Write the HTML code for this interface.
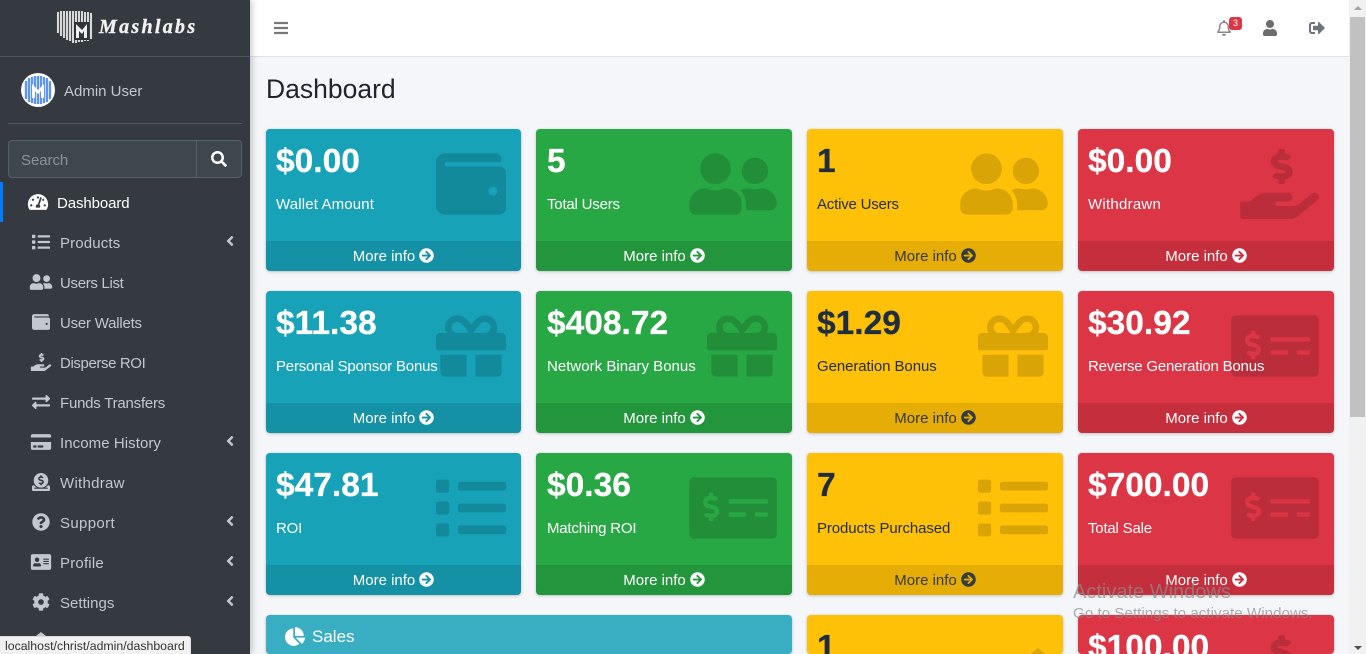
<!DOCTYPE html>
<html lang="en"><head><meta charset="utf-8"><title>Dashboard</title>
<style>
*{box-sizing:border-box}
html,body{margin:0;padding:0;width:1366px;height:654px;max-height:654px;overflow:hidden;background:#f4f6f9;font-family:"Liberation Sans",sans-serif}
#wrap{position:fixed;left:0;top:0;width:1366px;height:654px;overflow:hidden;background:#f4f6f9;contain:strict}
.a{position:absolute}
#side{position:absolute;left:0;top:0;width:250px;height:654px;background:#343a40;box-shadow:2px 0 6px rgba(0,0,0,.22);overflow:hidden;z-index:3}
#top{position:absolute;left:250px;top:0;width:1099px;height:57px;background:#fff;border-bottom:1px solid #dee2e6;z-index:2}
.t{position:absolute;left:60px;font-size:15px;letter-spacing:-.22px;line-height:20px;color:#c2c7d0;white-space:nowrap}
.si{position:absolute;left:29px;width:24px;height:18px;fill:#c2c7d0}
.ar{position:absolute;left:226px;width:8px;height:16px;fill:#c2c7d0}
.c{position:absolute;width:256px;height:142px;border-radius:4px;box-shadow:0 0 1px rgba(0,0,0,.125),0 1px 3px rgba(0,0,0,.2);overflow:hidden;color:#fff}
.b{background:#17a2b8}.g{background:#28a745}.y{background:#ffc107;color:#1f2d3d}.r{background:#dc3545}
.v{position:absolute;left:10px;top:16px;font-size:33.5px;line-height:34px;font-weight:700;white-space:nowrap;-webkit-text-stroke:.3px currentColor}
.l{position:absolute;left:10px;top:66px;font-size:15px;letter-spacing:-.2px;line-height:20px;white-space:nowrap}
.g .v,.g .l{left:11px}
.ic{position:absolute;right:15px;top:20px;height:70px;fill:rgba(0,0,0,.15)}
.f{position:absolute;left:0;right:0;bottom:0;height:30px;background:rgba(0,0,0,.1);text-align:center;font-size:15px;line-height:28px;padding-top:2px;white-space:nowrap;overflow:hidden}
.f svg{width:15px;height:15px;fill:currentColor;vertical-align:-2px;margin-left:4px}
.y .f{color:#343a40}
</style></head><body>
<div id="wrap">
<svg width="0" height="0" style="position:absolute"><defs>
<path id="wallet" d="M461.2 128H80c-8.84 0-16-7.16-16-16s7.16-16 16-16h384c8.84 0 16-7.16 16-16 0-26.51-21.49-48-48-48H64C28.65 32 0 60.65 0 96v320c0 35.35 28.65 64 64 64h397.2c28.02 0 50.8-21.53 50.8-48V176c0-26.47-22.78-48-50.8-48zM416 340c-17.67 0-32-14.33-32-32s14.33-32 32-32 32 14.33 32 32-14.33 32-32 32z"/>
<path id="friends" d="M192 256c61.9 0 112-50.1 112-112S253.9 32 192 32 80 82.1 80 144s50.1 112 112 112zm76.8 32h-8.3c-20.8 10-43.9 16-68.5 16s-47.6-6-68.5-16h-8.3C51.6 288 0 339.6 0 403.2V432c0 26.5 21.5 48 48 48h288c26.5 0 48-21.5 48-48v-28.8c0-63.6-51.6-115.2-115.2-115.2zM480 256c53 0 96-43 96-96s-43-96-96-96-96 43-96 96 43 96 96 96zm48 32h-3.8c-13.9 4.8-28.6 8-44.2 8s-30.3-3.2-44.2-8H432c-20.4 0-39.2 5.9-55.7 15.4 24.4 26.3 39.7 61.2 39.7 99.8v38.4c0 2.2-.5 4.3-.6 6.4H592c26.5 0 48-21.5 48-48 0-61.9-50.1-112-112-112z"/>
<path id="gift" d="M32 448c0 17.7 14.3 32 32 32h160V320H32v128zm256 32h160c17.7 0 32-14.3 32-32V320H288v160zm192-320h-42.1c6.2-12.1 10.1-25.5 10.1-40 0-48.5-39.5-88-88-88-41.6 0-68.5 21.3-103 68.3-34.5-47-61.4-68.3-103-68.3-48.5 0-88 39.5-88 88 0 14.5 3.8 27.9 10.1 40H32c-17.7 0-32 14.3-32 32v80c0 8.8 7.2 16 16 16h480c8.8 0 16-7.2 16-16v-80c0-17.7-14.3-32-32-32zm-326.1 0c-22.1 0-40-17.9-40-40s17.9-40 40-40c19.9 0 34.6 3.3 86.1 80h-86.1zm206.1 0h-86.1c51.4-76.5 65.7-80 86.1-80 22.1 0 40 17.9 40 40s-17.9 40-40 40z"/>
<path id="list" d="M80 368H16a16 16 0 0 0-16 16v64a16 16 0 0 0 16 16h64a16 16 0 0 0 16-16v-64a16 16 0 0 0-16-16zm0-320H16A16 16 0 0 0 0 64v64a16 16 0 0 0 16 16h64a16 16 0 0 0 16-16V64a16 16 0 0 0-16-16zm0 160H16a16 16 0 0 0-16 16v64a16 16 0 0 0 16 16h64a16 16 0 0 0 16-16v-64a16 16 0 0 0-16-16zm416 176H176a16 16 0 0 0-16 16v32a16 16 0 0 0 16 16h320a16 16 0 0 0 16-16v-32a16 16 0 0 0-16-16zm0-320H176a16 16 0 0 0-16 16v32a16 16 0 0 0 16 16h320a16 16 0 0 0 16-16V80a16 16 0 0 0-16-16zm0 160H176a16 16 0 0 0-16 16v32a16 16 0 0 0 16 16h320a16 16 0 0 0 16-16v-32a16 16 0 0 0-16-16z"/>
<path id="money" fill-rule="evenodd" d="M608 32H32C14.33 32 0 46.33 0 64v384c0 17.67 14.33 32 32 32h576c17.67 0 32-14.33 32-32V64c0-17.67-14.33-32-32-32zM176 327.88V344c0 4.42-3.58 8-8 8h-16c-4.42 0-8-3.58-8-8v-16.29c-11.29-.58-22.27-4.52-31.37-11.35-3.9-2.93-4.1-8.77-.57-12.14l11.75-11.21c2.77-2.64 6.89-2.76 10.13-.73 3.87 2.42 8.26 3.72 12.82 3.72h28.11c6.5 0 11.8-5.92 11.8-13.19 0-5.95-3.61-11.19-8.77-12.73l-45-13.5c-18.59-5.58-31.58-23.42-31.58-43.39 0-24.52 19.05-44.44 42.67-45.07V152c0-4.42 3.58-8 8-8h16c4.42 0 8 3.58 8 8v16.29c11.29.58 22.27 4.51 31.37 11.35 3.9 2.93 4.1 8.77.57 12.14l-11.75 11.21c-2.77 2.64-6.89 2.76-10.13.73-3.87-2.43-8.26-3.72-12.82-3.72h-28.11c-6.5 0-11.8 5.92-11.8 13.19 0 5.95 3.61 11.19 8.77 12.73l45 13.5c18.59 5.58 31.58 23.42 31.58 43.39 0 24.53-19.05 44.44-42.67 45.07zM416 312c0 4.42-3.58 8-8 8H296c-4.42 0-8-3.58-8-8v-16c0-4.42 3.58-8 8-8h112c4.42 0 8 3.58 8 8v16zm160 0c0 4.42-3.58 8-8 8h-80c-4.42 0-8-3.58-8-8v-16c0-4.42 3.58-8 8-8h80c4.42 0 8 3.58 8 8v16zm0-96c0 4.42-3.58 8-8 8H296c-4.42 0-8-3.58-8-8v-16c0-4.42 3.58-8 8-8h272c4.42 0 8 3.58 8 8v16z"/>
<path id="hand" d="M271.06,144.3l54.27,14.3a8.59,8.59,0,0,1,6.63,8.1c0,4.6-4.09,8.4-9.12,8.4h-35.6a30,30,0,0,1-11.19-2.2c-5.24-2.2-11.28-1.7-15.3,2l-19,17.5a11.68,11.68,0,0,0-2.25,2.66,11.42,11.42,0,0,0,3.88,15.74,83.77,83.77,0,0,0,34.51,11.5V240c0,8.8,7.83,16,17.37,16h17.37c9.55,0,17.38-7.2,17.38-16V222.4c32.93-3.6,57.84-31,53.5-63-3.15-23-22.46-41.3-46.56-47.7L282.68,97.4a8.59,8.59,0,0,1-6.63-8.1c0-4.6,4.09-8.4,9.12-8.4h35.6A30,30,0,0,1,332,83.1c5.23,2.2,11.28,1.7,15.3-2l19-17.5A11.31,11.31,0,0,0,368.47,61a11.43,11.43,0,0,0-3.84-15.78,83.82,83.82,0,0,0-34.52-11.5V16c0-8.8-7.82-16-17.37-16H295.37C285.82,0,278,7.2,278,16V33.6c-32.89,3.6-57.85,31-53.51,63C227.63,119.6,247,137.9,271.06,144.3ZM565.27,328.1c-11.8-10.7-30.2-10-42.6,0L430.27,402a63.64,63.64,0,0,1-40,14H272a16,16,0,0,1,0-32h78.29c15.9,0,30.71-10.9,33.25-26.6a31.2,31.2,0,0,0,.46-5.46A32,32,0,0,0,352,320H192a117.66,117.66,0,0,0-74.1,26.29L71.4,384H16A16,16,0,0,0,0,400v96a16,16,0,0,0,16,16H372.77a64,64,0,0,0,40-14L564,377a32,32,0,0,0,1.28-48.9Z"/>
<path id="arrow" d="M256 8c137 0 248 111 248 248S393 504 256 504 8 393 8 256 119 8 256 8zm-28.9 143.6l75.5 72.4H120c-13.3 0-24 10.7-24 24v16c0 13.3 10.7 24 24 24h182.6l-75.5 72.4c-9.7 9.3-9.9 24.8-.4 34.3l11 10.9c9.4 9.4 24.6 9.4 33.9 0L404.3 273c9.4-9.4 9.4-24.6 0-33.9L271.6 106.3c-9.4-9.4-24.6-9.4-33.9 0l-11 10.9c-9.3 9.6-9.1 25.1.4 34.4z"/>
<path id="tach" d="M288 32C128.94 32 0 160.94 0 320c0 52.8 14.25 102.26 39.06 144.8 5.61 9.62 16.3 15.2 27.44 15.2h443c11.14 0 21.83-5.58 27.44-15.2C561.75 422.26 576 372.8 576 320c0-159.06-128.94-288-288-288zm0 64c14.71 0 26.58 10.13 30.32 23.65-1.11 2.26-2.64 4.23-3.45 6.67l-9.22 27.67c-5.13 3.49-10.97 6.01-17.64 6.01-17.67 0-32-14.33-32-32S270.33 96 288 96zM96 384c-17.67 0-32-14.33-32-32s14.33-32 32-32 32 14.33 32 32-14.33 32-32 32zm48-160c-17.67 0-32-14.33-32-32s14.33-32 32-32 32 14.33 32 32-14.33 32-32 32zm246.77-72.41l-61.33 184C343.13 347.33 352 364.54 352 384c0 11.72-3.38 22.55-8.88 32H232.88c-5.5-9.45-8.88-20.28-8.88-32 0-33.94 26.5-61.43 59.9-63.59l61.34-184.01c4.17-12.56 17.73-19.45 30.36-15.17 12.57 4.19 19.35 17.79 15.17 30.36zm14.66 57.2l15.52-46.55c3.47-1.29 7.13-2.23 11.05-2.23 17.67 0 32 14.33 32 32s-14.33 32-32 32c-11.38-.01-20.89-6.28-26.57-15.22zM480 384c-17.67 0-32-14.33-32-32s14.33-32 32-32 32 14.33 32 32-14.33 32-32 32z"/>
<path id="exch" d="M0 168v-16c0-13.255 10.745-24 24-24h360V80c0-21.367 25.899-32.042 40.971-16.971l80 80c9.372 9.373 9.372 24.569 0 33.941l-80 80C409.956 271.982 384 261.456 384 240v-48H24c-13.255 0-24-10.745-24-24zm488 152H128v-48c0-21.314-25.862-32.08-40.971-16.971l-80 80c-9.372 9.373-9.372 24.569 0 33.941l80 80C102.057 463.997 128 453.437 128 432v-48h360c13.255 0 24-10.745 24-24v-16c0-13.255-10.745-24-24-24z"/>
<path id="card" d="M0 432c0 26.5 21.5 48 48 48h480c26.5 0 48-21.5 48-48V256H0v176zm192-68c0-6.6 5.4-12 12-12h136c6.6 0 12 5.4 12 12v40c0 6.6-5.4 12-12 12H204c-6.6 0-12-5.4-12-12v-40zm-128 0c0-6.6 5.4-12 12-12h72c6.6 0 12 5.4 12 12v40c0 6.6-5.4 12-12 12H76c-6.6 0-12-5.4-12-12v-40zM576 80v48H0V80c0-26.5 21.5-48 48-48h480c26.5 0 48 21.5 48 48z"/>
<path id="donate" d="M256 416c114.9 0 208-93.1 208-208S370.9 0 256 0 48 93.1 48 208s93.1 208 208 208zM233.8 97.4V80.6c0-9.2 7.4-16.6 16.6-16.6h11.1c9.2 0 16.6 7.4 16.6 16.6v17c15.5.8 30.5 6.1 43 15.4 5.6 4.1 6.2 12.3 1.2 17.1L306 145.6c-3.8 3.7-9.5 3.8-14 1-5.4-3.4-11.4-5.1-17.8-5.1h-38.9c-9 0-16.3 8.2-16.3 18.3 0 8.2 5 15.5 12.1 17.6l62.3 18.7c25.7 7.7 43.7 32.4 43.7 60.1 0 34-26.4 61.5-59.1 62.4v16.8c0 9.2-7.4 16.6-16.6 16.6h-11.1c-9.2 0-16.6-7.4-16.6-16.6v-17c-15.5-.8-30.5-6.1-43-15.4-5.6-4.1-6.2-12.3-1.2-17.1l16.3-15.5c3.8-3.7 9.5-3.8 14-1 5.4 3.4 11.4 5.1 17.8 5.1h38.9c9 0 16.3-8.2 16.3-18.3 0-8.2-5-15.5-12.1-17.6l-62.3-18.7c-25.7-7.7-43.7-32.4-43.7-60.1.1-34 26.4-61.5 59.1-62.4zM480 352h-32.5c-19.6 26-44.6 47.7-73 64h63.8c5.3 0 9.6 3.6 9.6 8v16c0 4.4-4.3 8-9.6 8H73.6c-5.3 0-9.6-3.6-9.6-8v-16c0-4.4 4.3-8 9.6-8h63.8c-28.4-16.3-53.3-38-73-64H32c-17.7 0-32 14.3-32 32v96c0 17.7 14.3 32 32 32h448c17.7 0 32-14.3 32-32v-96c0-17.7-14.3-32-32-32z"/>
<path id="q" d="M504 256c0 136.997-111.043 248-248 248S8 392.997 8 256C8 119.083 119.043 8 256 8s248 111.083 248 248zM262.655 90c-54.497 0-89.255 22.957-116.549 63.758-3.536 5.286-2.353 12.415 2.715 16.258l34.699 26.31c5.205 3.947 12.621 3.008 16.665-2.122 17.864-22.658 30.113-35.797 57.303-35.797 20.429 0 45.698 13.148 45.698 32.958 0 14.976-12.363 22.667-32.534 33.976C247.128 238.528 216 254.941 216 296v4c0 6.627 5.373 12 12 12h56c6.627 0 12-5.373 12-12v-1.333c0-28.462 83.186-29.647 83.186-106.667 0-58.002-60.165-102-116.531-102zM256 338c-25.365 0-46 20.635-46 46 0 25.364 20.635 46 46 46s46-20.636 46-46c0-25.365-20.635-46-46-46z"/>
<path id="addr" d="M528 32H48C21.5 32 0 53.5 0 80v352c0 26.5 21.5 48 48 48h480c26.5 0 48-21.5 48-48V80c0-26.5-21.5-48-48-48zm-352 96c35.3 0 64 28.7 64 64s-28.7 64-64 64-64-28.7-64-64 28.7-64 64-64zm112 236.8c0 10.6-10 19.2-22.4 19.2H86.4C74 384 64 375.4 64 364.8v-19.2c0-31.8 30.1-57.6 67.2-57.6h5c12.3 5.1 25.7 8 39.8 8s27.6-2.9 39.8-8h5c37.1 0 67.2 25.8 67.2 57.6v19.2zM512 312c0 4.4-3.6 8-8 8H360c-4.4 0-8-3.6-8-8v-16c0-4.4 3.6-8 8-8h144c4.4 0 8 3.6 8 8v16zm0-64c0 4.4-3.6 8-8 8H360c-4.4 0-8-3.6-8-8v-16c0-4.4 3.6-8 8-8h144c4.4 0 8 3.6 8 8v16zm0-64c0 4.4-3.6 8-8 8H360c-4.4 0-8-3.6-8-8v-16c0-4.4 3.6-8 8-8h144c4.4 0 8 3.6 8 8v16z"/>
<path id="cog" d="M487.4 315.7l-42.6-24.6c4.3-23.2 4.3-47 0-70.2l42.6-24.6c4.9-2.8 7.1-8.6 5.5-14-11.1-35.6-30-67.8-54.7-94.6-3.8-4.1-10-5.1-14.8-2.3L380.8 110c-17.9-15.4-38.5-27.3-60.8-35.1V25.8c0-5.6-3.9-10.5-9.4-11.7-36.7-8.2-74.3-7.8-109.2 0-5.5 1.2-9.4 6.1-9.4 11.7V75c-22.2 7.9-42.8 19.8-60.8 35.1L88.7 85.5c-4.9-2.8-11-1.9-14.8 2.3-24.7 26.7-43.6 58.9-54.7 94.6-1.7 5.4.6 11.2 5.5 14L67.3 221c-4.3 23.2-4.3 47 0 70.2l-42.6 24.6c-4.9 2.8-7.1 8.6-5.5 14 11.1 35.6 30 67.8 54.7 94.6 3.8 4.1 10 5.1 14.8 2.3l42.6-24.6c17.9 15.4 38.5 27.3 60.8 35.1v49.2c0 5.6 3.9 10.5 9.4 11.7 36.7 8.2 74.3 7.8 109.2 0 5.5-1.2 9.4-6.1 9.4-11.7v-49.2c22.2-7.9 42.8-19.8 60.8-35.1l42.6 24.6c4.9 2.8 11 1.9 14.8-2.3 24.7-26.7 43.6-58.9 54.7-94.6 1.5-5.5-.7-11.3-5.6-14.1zM256 336c-44.1 0-80-35.9-80-80s35.9-80 80-80 80 35.9 80 80-35.9 80-80 80z"/>
<path id="angle" d="M31.7 239l136-136c9.4-9.4 24.6-9.4 33.9 0l22.6 22.6c9.4 9.4 9.4 24.6 0 33.9L127.9 256l96.4 96.4c9.4 9.4 9.4 24.6 0 33.9L201.7 409c-9.4 9.4-24.6 9.4-33.9 0l-136-136c-9.5-9.4-9.5-24.6-.1-34z"/>
</defs></svg>

<div id="side">
  <div class="a" style="left:0;top:56px;width:250px;height:1px;background:#4b545c"></div>
  <svg class="a" style="left:56px;top:9px" width="38" height="35" viewBox="0 0 38 35">
    <g stroke="#d8d8d8" stroke-width="2.1">
      <path d="M2 3V24M5 2V27M8 2V29M11 2V31M14 2V32M17 2V34M20 2V34M23 2V33M26 2V33M29 3V32M32 3V32M35 4V30"/>
    </g>
    <path d="M18 13h15v18H18z" fill="#2f3338"/>
    <path d="M20 29V15l6 6 5-6v14h-3v-7l-2 3-3-3v7z" fill="#f0f0f0"/>
  </svg>
  <div class="a" style="left:99px;top:15px;font-family:'Liberation Serif',serif;font-style:italic;font-weight:700;font-size:20px;letter-spacing:2.3px;line-height:24px;color:#f0f0f0;white-space:nowrap;-webkit-text-stroke:.4px #f0f0f0">Mashlabs</div>

  <svg class="a" style="left:21px;top:73px" width="34" height="34" viewBox="0 0 34 34">
    <circle cx="17" cy="17" r="17" fill="#fff"/>
    <g stroke="#5c93ee" stroke-width="2.3"><path d="M5 8V26M8 5V29M11 4V30M14 3V31M17 3V31M20 3V31M23 4V30M26 5V29M29 8V26"/></g>
    <path d="M11 25V11l6 6 6-6v14h-3v-7l-3 3-3-3v7z" fill="#fff"/>
  </svg>
  <div class="t" style="left:64px;top:82px;letter-spacing:0">Admin User</div>
  <div class="a" style="left:8px;top:123px;width:234px;height:1px;background:#4f5962"></div>

  <div class="a" style="left:8px;top:140px;width:234px;height:38px;background:#3f474e;border:1px solid #56606a;border-radius:4px"></div>
  <div class="a" style="left:196px;top:140px;width:1px;height:38px;background:#56606a"></div>
  <div class="t" style="left:21px;top:151px;color:#8b9298;letter-spacing:-.05px">Search</div>
  <svg class="a" style="left:211px;top:151px;fill:#fff" width="16" height="16" viewBox="0 0 512 512"><path d="M505 442.7L405.3 343c-4.5-4.5-10.6-7-17-7H372c27.6-35.3 44-79.7 44-128C416 93.1 322.9 0 208 0S0 93.1 0 208s93.1 208 208 208c48.3 0 92.7-16.4 128-44v16.3c0 6.4 2.5 12.5 7 17l99.7 99.7c9.4 9.4 24.6 9.4 33.9 0l28.3-28.3c9.4-9.4 9.4-24.6.1-34zM208 336c-70.7 0-128-57.2-128-128 0-70.7 57.2-128 128-128 70.7 0 128 57.2 128 128 0 70.7-57.2 128-128 128z"/></svg>

  <div class="a" style="left:0;top:182px;width:3px;height:40px;background:#007bff"></div>
  <svg class="si" style="left:26px;top:193px;fill:#fff" viewBox="0 0 576 512"><use href="#tach"/></svg>
  <div class="t" style="left:57px;top:194px;color:#fff;letter-spacing:-.1px">Dashboard</div>

  <svg class="si" style="top:233px" viewBox="0 0 512 512"><use href="#list"/></svg>
  <div class="t" style="top:234px;letter-spacing:.15px">Products</div>
  <svg class="ar" style="top:233px" viewBox="0 0 256 512"><use href="#angle"/></svg>

  <svg class="si" style="top:273px" viewBox="0 0 640 512"><use href="#friends"/></svg>
  <div class="t" style="top:274px;letter-spacing:-.32px">Users List</div>

  <svg class="si" style="top:313px" viewBox="0 0 512 512"><use href="#wallet"/></svg>
  <div class="t" style="top:314px">User Wallets</div>

  <svg class="si" style="top:353px" viewBox="0 0 576 512"><use href="#hand"/></svg>
  <div class="t" style="top:354px;letter-spacing:-.39px">Disperse ROI</div>

  <svg class="si" style="top:393px" viewBox="0 0 512 512"><use href="#exch"/></svg>
  <div class="t" style="top:394px">Funds Transfers</div>

  <svg class="si" style="top:433px" viewBox="0 0 576 512"><use href="#card"/></svg>
  <div class="t" style="top:434px;letter-spacing:.07px">Income History</div>
  <svg class="ar" style="top:433px" viewBox="0 0 256 512"><use href="#angle"/></svg>

  <svg class="si" style="top:473px" viewBox="0 0 512 512"><use href="#donate"/></svg>
  <div class="t" style="top:474px;letter-spacing:.28px">Withdraw</div>

  <svg class="si" style="top:513px" viewBox="0 0 512 512"><use href="#q"/></svg>
  <div class="t" style="top:514px;letter-spacing:.35px">Support</div>
  <svg class="ar" style="top:513px" viewBox="0 0 256 512"><use href="#angle"/></svg>

  <svg class="si" style="top:553px" viewBox="0 0 576 512"><use href="#addr"/></svg>
  <div class="t" style="top:554px;letter-spacing:.2px">Profile</div>
  <svg class="ar" style="top:553px" viewBox="0 0 256 512"><use href="#angle"/></svg>

  <svg class="si" style="top:593px" viewBox="0 0 512 512"><use href="#cog"/></svg>
  <div class="t" style="top:594px;letter-spacing:.03px">Settings</div>
  <svg class="ar" style="top:593px" viewBox="0 0 256 512"><use href="#angle"/></svg>

  <div class="a" style="left:34px;top:632px;width:14px;height:14px;background:#c2c7d0;clip-path:polygon(50% 0,100% 40%,100% 100%,0 100%,0 40%)"></div>
</div>

<div id="top">
  <svg class="a" style="left:24px;top:20px;fill:#777" width="14" height="16" viewBox="0 0 448 512"><path d="M16 132h416c8.837 0 16-7.163 16-16V76c0-8.837-7.163-16-16-16H16C7.163 60 0 67.163 0 76v40c0 8.837 7.163 16 16 16zm0 160h416c8.837 0 16-7.163 16-16v-40c0-8.837-7.163-16-16-16H16c-8.837 0-16 7.163-16 16v40c0 8.837 7.163 16 16 16zm0 160h416c8.837 0 16-7.163 16-16v-40c0-8.837-7.163-16-16-16H16c-8.837 0-16 7.163-16 16v40c0 8.837 7.163 16 16 16z"/></svg>
  <svg class="a" style="left:967px;top:20px;fill:#888" width="14" height="16" viewBox="0 0 448 512"><path d="M439.39 362.29c-19.32-20.76-55.47-51.99-55.47-154.29 0-77.7-54.48-139.9-127.94-155.16V32c0-17.67-14.32-32-31.98-32s-31.98 14.33-31.98 32v20.84C118.56 68.1 64.08 130.3 64.08 208c0 102.3-36.15 133.53-55.47 154.29-6 6.45-8.66 14.16-8.61 21.71.11 16.4 12.98 32 32.1 32h383.8c19.12 0 32-15.6 32.1-32 .05-7.55-2.61-15.27-8.61-21.71zM67.53 368c21.22-27.97 44.42-74.33 44.53-159.42 0-.2-.06-.38-.06-.58 0-61.86 50.14-112 112-112s112 50.14 112 112c0 .2-.06.38-.06.58.11 85.1 23.31 131.46 44.53 159.42H67.53zM224 512c35.32 0 63.97-28.65 63.97-64H160.03c0 35.35 28.65 64 63.97 64z"/></svg>
  <div class="a" style="left:979px;top:17px;width:13px;height:13px;border-radius:3px;background:#dc3545;color:#fff;font-size:9px;line-height:13px;text-align:center">3</div>
  <svg class="a" style="left:1013px;top:20px;fill:#6c6c6c" width="14" height="16" viewBox="0 0 448 512"><path d="M224 256c70.7 0 128-57.3 128-128S294.7 0 224 0 96 57.3 96 128s57.3 128 128 128zm89.6 32h-16.7c-22.2 10.2-46.9 16-72.9 16s-50.6-5.8-72.9-16h-16.7C60.2 288 0 348.2 0 422.4V464c0 26.5 21.5 48 48 48h352c26.5 0 48-21.5 48-48v-41.6c0-74.2-60.2-134.4-134.4-134.4z"/></svg>
  <svg class="a" style="left:1059px;top:20px;fill:#6c757d" width="16" height="16" viewBox="0 0 512 512"><path d="M497 273L329 441c-15 15-41 4.5-41-17v-96H152c-13.3 0-24-10.7-24-24v-96c0-13.3 10.7-24 24-24h136V88c0-21.4 25.9-32 41-17l168 168c9.3 9.4 9.3 24.6 0 34zM192 436v-40c0-6.6-5.4-12-12-12H96c-17.7 0-32-14.3-32-32V160c0-17.7 14.3-32 32-32h84c6.6 0 12-5.4 12-12V76c0-6.6-5.4-12-12-12H96c-53 0-96 43-96 96v192c0 53 43 96 96 96h84c6.6 0 12-5.4 12-12z"/></svg>
</div>

<div class="a" style="left:266px;top:73px;font-size:26.5px;line-height:32px;color:#212529;white-space:nowrap">Dashboard</div>

<!-- Row 1 -->
<div class="c b" style="left:266px;top:129px;width:255px"><div class="v">$0.00</div><div class="l" style="letter-spacing:.15px">Wallet Amount</div><svg class="ic" width="70" viewBox="0 0 512 512"><use href="#wallet"/></svg><div class="f">More info<svg viewBox="0 0 512 512"><use href="#arrow"/></svg></div></div>
<div class="c g" style="left:536px;top:129px"><div class="v">5</div><div class="l">Total Users</div><svg class="ic" width="88" viewBox="0 0 640 512"><use href="#friends"/></svg><div class="f">More info<svg viewBox="0 0 512 512"><use href="#arrow"/></svg></div></div>
<div class="c y" style="left:807px;top:129px"><div class="v">1</div><div class="l">Active Users</div><svg class="ic" width="88" viewBox="0 0 640 512"><use href="#friends"/></svg><div class="f">More info<svg viewBox="0 0 512 512"><use href="#arrow"/></svg></div></div>
<div class="c r" style="left:1078px;top:129px"><div class="v">$0.00</div><div class="l" style="letter-spacing:.25px">Withdrawn</div><svg class="ic" width="79" viewBox="0 0 576 512"><use href="#hand"/></svg><div class="f">More info<svg viewBox="0 0 512 512"><use href="#arrow"/></svg></div></div>

<!-- Row 2 -->
<div class="c b" style="left:266px;top:291px;width:255px"><div class="v">$11.38</div><svg class="ic" width="70" viewBox="0 0 512 512"><use href="#gift"/></svg><div class="l">Personal Sponsor Bonus</div><div class="f">More info<svg viewBox="0 0 512 512"><use href="#arrow"/></svg></div></div>
<div class="c g" style="left:536px;top:291px"><div class="v">$408.72</div><svg class="ic" width="70" viewBox="0 0 512 512"><use href="#gift"/></svg><div class="l" style="letter-spacing:.02px">Network Binary Bonus</div><div class="f">More info<svg viewBox="0 0 512 512"><use href="#arrow"/></svg></div></div>
<div class="c y" style="left:807px;top:291px"><div class="v">$1.29</div><svg class="ic" width="70" viewBox="0 0 512 512"><use href="#gift"/></svg><div class="l" style="letter-spacing:-.08px">Generation Bonus</div><div class="f">More info<svg viewBox="0 0 512 512"><use href="#arrow"/></svg></div></div>
<div class="c r" style="left:1078px;top:291px"><div class="v">$30.92</div><svg class="ic" width="88" viewBox="0 0 640 512"><use href="#money"/></svg><div class="l">Reverse Generation Bonus</div><div class="f">More info<svg viewBox="0 0 512 512"><use href="#arrow"/></svg></div></div>

<!-- Row 3 -->
<div class="c b" style="left:266px;top:453px;width:255px"><div class="v">$47.81</div><svg class="ic" width="70" viewBox="0 0 512 512"><use href="#list"/></svg><div class="l">ROI</div><div class="f">More info<svg viewBox="0 0 512 512"><use href="#arrow"/></svg></div></div>
<div class="c g" style="left:536px;top:453px"><div class="v">$0.36</div><svg class="ic" width="88" viewBox="0 0 640 512"><use href="#money"/></svg><div class="l">Matching ROI</div><div class="f">More info<svg viewBox="0 0 512 512"><use href="#arrow"/></svg></div></div>
<div class="c y" style="left:807px;top:453px"><div class="v">7</div><svg class="ic" width="70" viewBox="0 0 512 512"><use href="#list"/></svg><div class="l" style="letter-spacing:-.1px">Products Purchased</div><div class="f">More info<svg viewBox="0 0 512 512"><use href="#arrow"/></svg></div></div>
<div class="c r" style="left:1078px;top:453px"><div class="v">$700.00</div><svg class="ic" width="88" viewBox="0 0 640 512"><use href="#money"/></svg><div class="l">Total Sale</div><div class="f">More info<svg viewBox="0 0 512 512"><use href="#arrow"/></svg></div></div>

<!-- Row 4 -->
<div class="c" style="left:266px;top:615px;width:526px;height:39px;background:#39aec2">
  <svg class="a" style="left:19px;top:12px;fill:#fff" width="20" height="19" viewBox="0 0 544 512"><path d="M527.79 288H290.5l158.03 158.03c6.04 6.04 15.98 6.53 22.19.68 38.7-36.46 65.32-85.61 73.13-140.86 1.34-9.46-6.51-17.85-16.06-17.85zm-15.83-64.8C503.72 103.74 408.26 8.28 288.8.04 279.68-.59 272 7.1 272 16.24V240h223.77c9.14 0 16.82-7.68 16.19-16.8zM224 288V50.71c0-9.55-8.39-17.4-17.84-16.06C86.99 51.49-4.1 155.6.14 280.37 4.5 408.51 114.83 513.59 243.03 511.98c50.4-.63 96.97-16.87 135.26-44.03 7.9-5.6 8.42-17.23 1.57-24.08L224 288z"/></svg>
  <div class="a" style="left:46px;top:11px;font-size:17px;line-height:22px;color:#fff">Sales</div>
</div>
<div class="c y" style="left:807px;top:615px;height:39px"><div class="v" style="top:27px;line-height:12px">1</div><div class="a" style="left:222px;top:33px;width:18px;height:6px;overflow:hidden"><div style="width:18px;height:12px;background:rgba(0,0,0,.15);clip-path:polygon(50% 0,100% 60%,100% 100%,0 100%,0 60%)"></div></div></div>
<div class="c r" style="left:1078px;top:615px;height:39px"><div class="v" style="top:27px;line-height:12px">$100.00</div><svg class="ic" style="height:19px" width="79" viewBox="0 0 576 139"><use href="#hand"/></svg></div>

<!-- Scrollbar -->
<div class="a" style="left:1349px;top:0;width:17px;height:654px;background:#f1f1f1;z-index:4"></div>
<div class="a" style="left:1350px;top:17px;width:15px;height:400px;background:#c1c1c1;z-index:5"></div>
<div class="a" style="left:1354px;top:6px;width:0;height:0;border-left:4px solid transparent;border-right:4px solid transparent;border-bottom:4px solid #a3a3a3;z-index:5"></div>
<div class="a" style="left:1354px;top:646px;width:0;height:0;border-left:4px solid transparent;border-right:4px solid transparent;border-top:4px solid #505050;z-index:5"></div>

<!-- Status tooltip -->
<div class="a" style="left:0;top:636px;width:191px;height:18px;background:#f1f1f1;border:1px solid #dcdcdc;border-left:0;border-bottom:0;border-top-right-radius:3px;color:#333;font-size:12.3px;line-height:17px;padding-top:1px;padding-left:5px;white-space:nowrap;overflow:hidden;z-index:6">localhost/christ/admin/dashboard</div>

<!-- Watermark -->
<div class="a" style="left:1073px;top:580px;font-size:20px;line-height:24px;color:rgba(140,140,140,.7);white-space:nowrap;z-index:7">Activate Windows</div>
<div class="a" style="left:1073px;top:605px;font-size:15.2px;line-height:18px;color:rgba(140,140,140,.7);white-space:nowrap;z-index:7">Go to Settings to activate Windows.</div>
</div>
</body></html>
